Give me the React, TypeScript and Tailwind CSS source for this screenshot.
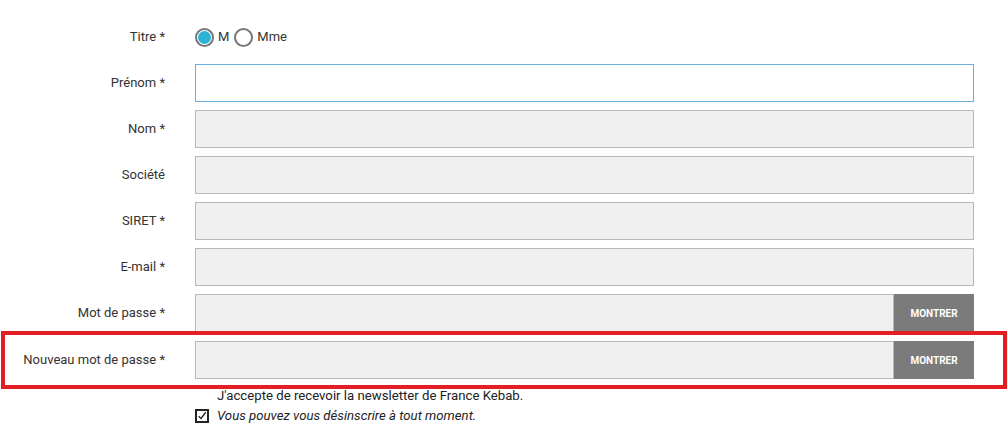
const fields = [
  { label: "Prénom *", focused: true },
  { label: "Nom *" },
  { label: "Société" },
  { label: "SIRET *" },
  { label: "E-mail *" },
];

function Row({ label, children }: { label: string; children: React.ReactNode }) {
  return (
    <div className="flex h-[38px] items-center">
      <div className="w-[165px] shrink-0 text-right text-[13px] text-[#333]">{label}</div>
      <div className="ml-[30px] flex h-full w-[779px] items-center">{children}</div>
    </div>
  );
}

function Radio({ checked, label }: { checked?: boolean; label: string }) {
  return (
    <label className="flex items-center">
      <span className="flex h-[19px] w-[19px] items-center justify-center rounded-full border-2 border-[#777] bg-white">
        {checked && <span className="h-[13px] w-[13px] rounded-full bg-[#2bb3d6]" />}
      </span>
      <span className="ml-[4px] text-[13px] text-[#333]">{label}</span>
    </label>
  );
}

function Password({ label }: { label: string }) {
  return (
    <Row label={label}>
      <div className="h-full flex-1 border border-[#b8b8b8] bg-[#f0f0f0]" />
      <button className="h-full w-[80px] bg-[#7b7b7b] text-[10px] font-bold text-white">MONTRER</button>
    </Row>
  );
}

export default function App() {
  return (
    <div className="min-h-[435px] w-[1008px] bg-white pt-[18px] font-['Roboto',sans-serif]">
      <div className="flex flex-col gap-[8px]">
        <Row label="Titre *">
          <div className="flex items-center gap-[5px]">
            <Radio checked label="M" />
            <Radio label="Mme" />
          </div>
        </Row>
        {fields.map((f) => (
          <Row key={f.label} label={f.label}>
            <div
              className={
                f.focused
                  ? "h-full w-full border border-[#6aaee0] bg-white"
                  : "h-full w-full border border-[#b8b8b8] bg-[#f0f0f0]"
              }
            />
          </Row>
        ))}
        <Password label="Mot de passe *" />
        <div className="relative mt-[1px]">
          <Password label="Nouveau mot de passe *" />
          <div className="pointer-events-none absolute left-[1px] top-[-10px] h-[58px] w-[1006px] border-[4px] border-[#e41e25]" />
        </div>
      </div>
      <div className="mt-[7px] flex items-end pl-[195px] text-[13.2px] leading-[20px] text-[#222]">
        <span className="mb-[3px] flex h-[14px] w-[14px] items-center justify-center border-2 border-[#222]">
          <svg viewBox="0 0 12 12" className="h-[12px] w-[12px]" fill="none" stroke="#222" strokeWidth="1.6">
            <path d="M2 6.2 L4.8 9 L10.5 1.5" />
          </svg>
        </span>
        <div className="ml-[8px]">
          <div>J'accepte de recevoir la newsletter de France Kebab.</div>
          <div className="italic">Vous pouvez vous désinscrire à tout moment.</div>
        </div>
      </div>
    </div>
  );
}
